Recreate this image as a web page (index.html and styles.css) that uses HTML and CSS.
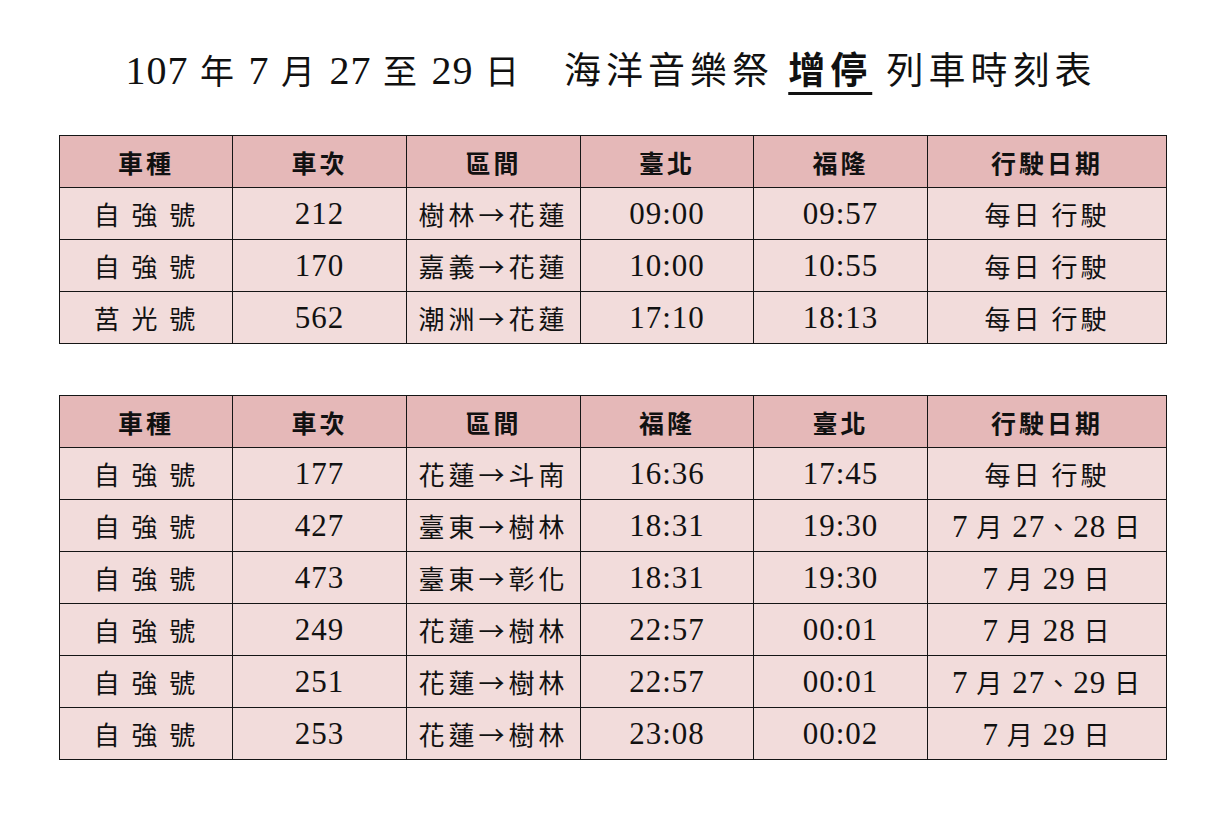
FILE: index.html
```html
<!DOCTYPE html>
<html lang="zh-Hant">
<head>
<meta charset="utf-8">
<title>海洋音樂祭 增停 列車時刻表</title>
<link rel="stylesheet" href="styles.css">
</head>
<body>
<div class="page">
  <h1 class="title"><span class="date-part"><span class="num">107</span> 年 <span class="num">7</span> 月 <span class="num">27</span> 至 <span class="num">29</span> 日</span><span class="name-part">　海洋音樂祭 <span class="em">增停</span> 列車時刻表</span></h1>

  <table class="timetable">
    <colgroup>
      <col class="c1"><col class="c2"><col class="c3"><col class="c4"><col class="c5"><col class="c6">
    </colgroup>
    <thead>
      <tr><th>車種</th><th>車次</th><th>區間</th><th>臺北</th><th>福隆</th><th>行駛日期</th></tr>
    </thead>
    <tbody>
      <tr><td class="zh">自 強 號</td><td class="num">212</td><td class="zh route">樹林→花蓮</td><td class="num">09:00</td><td class="num">09:57</td><td class="zh">每日 行駛</td></tr>
      <tr><td class="zh">自 強 號</td><td class="num">170</td><td class="zh route">嘉義→花蓮</td><td class="num">10:00</td><td class="num">10:55</td><td class="zh">每日 行駛</td></tr>
      <tr><td class="zh">莒 光 號</td><td class="num">562</td><td class="zh route">潮洲→花蓮</td><td class="num">17:10</td><td class="num">18:13</td><td class="zh">每日 行駛</td></tr>
    </tbody>
  </table>

  <table class="timetable second">
    <colgroup>
      <col class="c1"><col class="c2"><col class="c3"><col class="c4"><col class="c5"><col class="c6">
    </colgroup>
    <thead>
      <tr><th>車種</th><th>車次</th><th>區間</th><th>福隆</th><th>臺北</th><th>行駛日期</th></tr>
    </thead>
    <tbody>
      <tr><td class="zh">自 強 號</td><td class="num">177</td><td class="zh route">花蓮→斗南</td><td class="num">16:36</td><td class="num">17:45</td><td class="zh">每日 行駛</td></tr>
      <tr><td class="zh">自 強 號</td><td class="num">427</td><td class="zh route">臺東→樹林</td><td class="num">18:31</td><td class="num">19:30</td><td class="zh date"><span class="num">7</span> 月 <span class="num">27</span>、<span class="num">28</span> 日</td></tr>
      <tr><td class="zh">自 強 號</td><td class="num">473</td><td class="zh route">臺東→彰化</td><td class="num">18:31</td><td class="num">19:30</td><td class="zh date"><span class="num">7</span> 月 <span class="num">29</span> 日</td></tr>
      <tr><td class="zh">自 強 號</td><td class="num">249</td><td class="zh route">花蓮→樹林</td><td class="num">22:57</td><td class="num">00:01</td><td class="zh date"><span class="num">7</span> 月 <span class="num">28</span> 日</td></tr>
      <tr><td class="zh">自 強 號</td><td class="num">251</td><td class="zh route">花蓮→樹林</td><td class="num">22:57</td><td class="num">00:01</td><td class="zh date"><span class="num">7</span> 月 <span class="num">27</span>、<span class="num">29</span> 日</td></tr>
      <tr><td class="zh">自 強 號</td><td class="num">253</td><td class="zh route">花蓮→樹林</td><td class="num">23:08</td><td class="num">00:02</td><td class="zh date"><span class="num">7</span> 月 <span class="num">29</span> 日</td></tr>
    </tbody>
  </table>
</div>
</body>
</html>
```

FILE: styles.css
```css
html, body {
  margin: 0;
  padding: 0;
  background: #ffffff;
}

body {
  font-family: "Liberation Serif", "Noto Sans CJK TC", serif;
  color: #111111;
}

.page {
  width: 1222px;
  padding-top: 46px;
}

.title {
  margin: 0 0 37px 0;
  text-align: center;
  font-size: 34px;
  line-height: 50px;
  font-weight: 400;
  font-family: "Liberation Serif", "Noto Sans CJK TC", serif;
}

.title .date-part {
  letter-spacing: 3px;
}

.title .date-part .num {
  font-size: 40px;
  letter-spacing: 1px;
}

.title .name-part {
  font-size: 37px;
  letter-spacing: 5px;
}

.title .em {
  font-weight: 700;
  text-decoration: underline;
  text-decoration-thickness: 3px;
  text-underline-offset: 8px;
}

.timetable {
  margin-left: 59px;
  width: 1107px;
  border-collapse: collapse;
  table-layout: fixed;
}

.timetable.second {
  margin-top: 51px;
}

.c1 { width: 173px; }
.c2 { width: 174px; }
.c3 { width: 174px; }
.c4 { width: 173px; }
.c5 { width: 174px; }
.c6 { width: 239px; }

.timetable th,
.timetable td {
  border: 1.5px solid #151515;
  height: 51px;
  padding: 0;
  text-align: center;
  vertical-align: middle;
}

.timetable th {
  background: #e5b8b8;
  font-size: 25px;
  font-weight: 700;
  letter-spacing: 3px;
  font-family: "Noto Sans CJK TC", sans-serif;
}

.timetable td {
  background: #f2dcdb;
}

.timetable td.zh {
  font-family: "Noto Sans CJK TC", sans-serif;
  font-size: 26px;
  font-weight: 400;
  letter-spacing: 3px;
}

.timetable td.route {
  letter-spacing: 4px;
}

.timetable td.num,
.timetable td .num {
  font-family: "Liberation Serif", serif;
  font-size: 31px;
  letter-spacing: 1px;
}

.timetable td.date {
  letter-spacing: 2px;
}
```
